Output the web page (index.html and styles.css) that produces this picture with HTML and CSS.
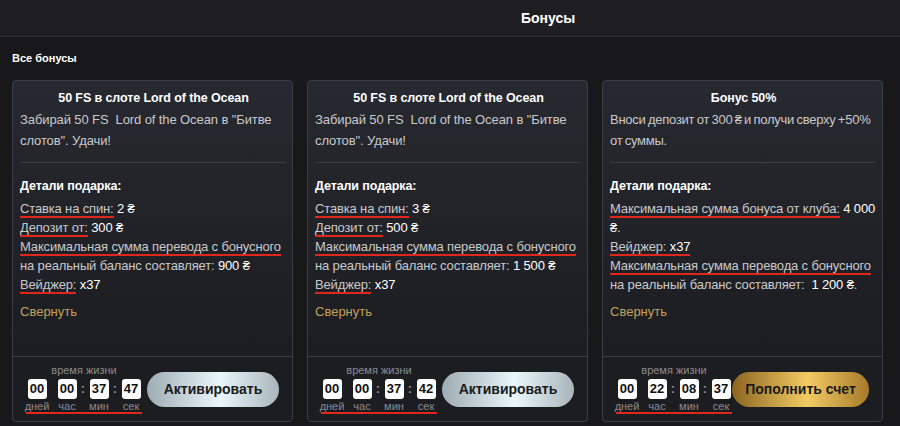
FILE: index.html
```html
<!DOCTYPE html>
<html lang="ru">

<head>
    <meta charset="UTF-8">
    <meta name="viewport" content="width=device-width, initial-scale=1.0">
    <title>Бонусы</title>
    <link rel="stylesheet" href="styles.css">
</head>

<body>
    <header class="header">
        <h1 class="header-title">Бонусы</h1>
    </header>

    <main class="page">
        <h2 class="section-title">Все бонусы</h2>

        <div class="cards">
            <!-- card 1 -->
            <div class="card">
                <div class="card-body">
                    <h3 class="card-title">50 FS в слоте Lord of the Ocean</h3>
                    <p class="card-desc">Забирай 50 FS&nbsp; Lord of the Ocean в "Битве слотов". Удачи!</p>
                    <div class="divider"></div>
                    <h4 class="details-title">Детали подарка:</h4>
                    <ul class="details">
                        <li><span class="mark">Ставка на спин:</span> <b>2 ₴</b></li>
                        <li><span class="mark">Депозит от:</span> <b>300 ₴</b></li>
                        <li><span class="mark">Максимальная сумма перевода с бонусного</span> на реальный баланс составляет: <b>900 ₴</b></li>
                        <li><span class="mark">Вейджер:</span> <b>x37</b></li>
                    </ul>
                    <a class="collapse" href="#">Свернуть</a>
                </div>
                <div class="card-footer">
                    <div class="timer">
                        <div class="timer-caption">время жизни</div>
                        <div class="timer-row">
                            <div class="unit"><span class="box">00</span><span class="unit-label">дней</span></div>
                            <div class="space"></div>
                            <div class="unit"><span class="box">00</span><span class="unit-label">час</span></div>
                            <div class="colon">:</div>
                            <div class="unit"><span class="box">37</span><span class="unit-label">мин</span></div>
                            <div class="colon">:</div>
                            <div class="unit"><span class="box">47</span><span class="unit-label">сек</span></div>
                        </div>
                    </div>
                    <button class="btn btn-silver">Активировать</button>
                </div>
            </div>

            <!-- card 2 -->
            <div class="card">
                <div class="card-body">
                    <h3 class="card-title">50 FS в слоте Lord of the Ocean</h3>
                    <p class="card-desc">Забирай 50 FS&nbsp; Lord of the Ocean в "Битве слотов". Удачи!</p>
                    <div class="divider"></div>
                    <h4 class="details-title">Детали подарка:</h4>
                    <ul class="details">
                        <li><span class="mark">Ставка на спин:</span> <b>3 ₴</b></li>
                        <li><span class="mark">Депозит от:</span> <b>500 ₴</b></li>
                        <li><span class="mark">Максимальная сумма перевода с бонусного</span> на реальный баланс составляет: <b>1 500 ₴</b></li>
                        <li><span class="mark">Вейджер:</span> <b>x37</b></li>
                    </ul>
                    <a class="collapse" href="#">Свернуть</a>
                </div>
                <div class="card-footer">
                    <div class="timer">
                        <div class="timer-caption">время жизни</div>
                        <div class="timer-row">
                            <div class="unit"><span class="box">00</span><span class="unit-label">дней</span></div>
                            <div class="space"></div>
                            <div class="unit"><span class="box">00</span><span class="unit-label">час</span></div>
                            <div class="colon">:</div>
                            <div class="unit"><span class="box">37</span><span class="unit-label">мин</span></div>
                            <div class="colon">:</div>
                            <div class="unit"><span class="box">42</span><span class="unit-label">сек</span></div>
                        </div>
                    </div>
                    <button class="btn btn-silver">Активировать</button>
                </div>
            </div>

            <!-- card 3 -->
            <div class="card">
                <div class="card-body">
                    <h3 class="card-title">Бонус 50%</h3>
                    <p class="card-desc tight">Вноси депозит от 300 ₴ и получи сверху +50% от суммы.</p>
                    <div class="divider"></div>
                    <h4 class="details-title">Детали подарка:</h4>
                    <ul class="details">
                        <li><span class="mark">Максимальная сумма бонуса от клуба:</span> <b>4 000 ₴</b>.</li>
                        <li><span class="mark">Вейджер: <b>x37</b></span></li>
                        <li><span class="mark">Максимальная сумма перевода с бонусного</span> на реальный баланс составляет:&nbsp; <b>1 200 ₴</b>.</li>
                    </ul>
                    <a class="collapse" href="#">Свернуть</a>
                </div>
                <div class="card-footer">
                    <div class="timer">
                        <div class="timer-caption">время жизни</div>
                        <div class="timer-row">
                            <div class="unit"><span class="box">00</span><span class="unit-label">дней</span></div>
                            <div class="space"></div>
                            <div class="unit"><span class="box">22</span><span class="unit-label">час</span></div>
                            <div class="colon">:</div>
                            <div class="unit"><span class="box">08</span><span class="unit-label">мин</span></div>
                            <div class="colon">:</div>
                            <div class="unit"><span class="box">37</span><span class="unit-label">сек</span></div>
                        </div>
                    </div>
                    <button class="btn btn-gold">Пополнить счет</button>
                </div>
            </div>
        </div>
    </main>
</body>

</html>
```

FILE: styles.css
```css
* {
    margin: 0;
    padding: 0;
    box-sizing: border-box;
    list-style: none;
}

body {
    background: #18181b;
    color: #c9c9cc;
    font-family: "Liberation Sans", Arial, "DejaVu Sans", sans-serif;
    font-size: 13px;
    height: 426px;
    overflow: hidden;
}

.header {
    height: 37px;
    background: #1f1f22;
    border-bottom: 1px solid #2f2f33;
    display: flex;
    align-items: center;
    justify-content: center;
    padding-left: 196px;
}

.header-title {
    font-size: 14px;
    font-weight: bold;
    color: #fff;
}

.page {
    padding: 15px 12px 0;
}

.section-title {
    font-size: 11px;
    font-weight: bold;
    color: #fff;
    line-height: 13px;
    margin-bottom: 15px;
}

.cards {
    display: flex;
    gap: 14px;
}

.card {
    width: 281px;
    height: 342px;
    border: 1px solid #3b3d43;
    border-radius: 4px;
    background: linear-gradient(to bottom, #272930, #1c1d21 80%);
    display: flex;
    flex-direction: column;
}

.card-body {
    flex: 1;
    padding: 9px 5px 0 7px;
}

.card-title {
    text-align: center;
    font-size: 12.5px;
    letter-spacing: -0.1px;
    font-weight: bold;
    color: #fff;
    line-height: 17px;
    margin-bottom: 2px;
}

.card-desc {
    line-height: 21px;
    color: #c9c9cc;
    letter-spacing: -0.1px;
}

.card-desc.tight {
    letter-spacing: -0.25px;
    word-spacing: -1px;
}

.divider {
    height: 1px;
    background: #3b3d43;
    margin: 11px 1px 13px 0;
}

.details-title {
    font-size: 12.5px;
    letter-spacing: -0.1px;
    font-weight: bold;
    color: #fff;
    line-height: 20px;
    margin-bottom: 3px;
}

.details li {
    line-height: 19px;
    letter-spacing: -0.15px;
}

.details b {
    font-weight: normal;
    color: #fff;
}

.mark {
    border-bottom: 2px solid #e0271d;
}

.collapse {
    display: block;
    margin-top: 8px;
    color: #c2a05a;
    text-decoration: none;
    line-height: 19px;
}

.card-footer {
    height: 65px;
    border-top: 1px solid #3b3d43;
    display: flex;
    align-items: center;
    justify-content: space-between;
    padding: 0 13px 0 13px;
}

.timer {
    display: flex;
    flex-direction: column;
    align-items: center;
}

.timer-caption {
    font-size: 11px;
    line-height: 13px;
    color: #8b8b90;
    margin-bottom: 2px;
}

.timer-row {
    display: flex;
    border-bottom: 2px solid #e0271d;
}

.unit {
    width: 22px;
    display: flex;
    flex-direction: column;
    align-items: center;
}

.box {
    width: 19px;
    height: 20px;
    background: #fff;
    border-radius: 3px;
    color: #111;
    font-weight: bold;
    font-size: 13px;
    line-height: 20px;
    text-align: center;
}

.unit-label {
    font-size: 11px;
    line-height: 12px;
    color: #8b8b90;
    margin-top: 1px;
}

.space {
    width: 8px;
}

.colon {
    width: 10px;
    height: 20px;
    line-height: 20px;
    text-align: center;
    color: #8b8b90;
    font-weight: bold;
}

.btn {
    height: 35px;
    border: none;
    border-radius: 18px;
    font-family: "Liberation Sans", Arial, sans-serif;
    font-weight: bold;
    font-size: 14px;
    color: #1a1a1a;
    white-space: nowrap;
}

.btn-silver {
    width: 132px;
    background: linear-gradient(to right, #9eacb3, #e9f6fa 55%, #a9b5bb);
}

.btn-gold {
    width: 138px;
    background: linear-gradient(to right, #8c6521, #f2cb63 55%, #a67a2b);
}
```
